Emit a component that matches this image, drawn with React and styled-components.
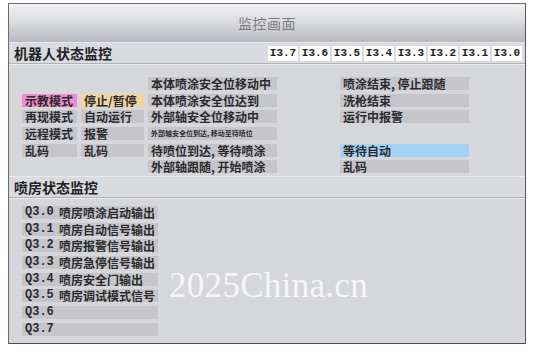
import React from 'react';
import styled, { createGlobalStyle } from 'styled-components';

const GlobalStyle = createGlobalStyle`
  html, body {
    margin: 0;
    padding: 0;
    background: #ffffff;
  }
  body {
    font-family: "Noto Sans CJK SC", "DejaVu Sans", sans-serif;
  }
`;

const tones = {
  grey: '#c6c6ca',
  pink: '#f08bcf',
  orange: '#f6d49e',
  blue: '#a2d2f5',
};

const Panel = styled.div`
  position: relative;
  margin: 3px 0 0 8px;
  width: 516px;
  height: 339px;
  border: 1px solid #6a6a6e;
  border-right-color: #55565a;
  border-bottom-color: #4a4a4e;
  background: #d6d7db;
  display: flex;
  flex-direction: column;
  overflow: hidden;
`;

const Header = styled.div`
  height: 38px;
  flex: none;
  display: flex;
  align-items: center;
  justify-content: center;
  background: linear-gradient(#f2f2f4 0%, #dcdde0 45%, #b9bac0 100%);
  color: #7c7c80;
  font-size: 14px;
  letter-spacing: 0.5px;
`;

const SectionBar = styled.div`
  height: 20px;
  flex: none;
  display: flex;
  align-items: center;
  justify-content: space-between;
  padding: 0 3px 0 5px;
  background: #dadbde;
  border-top: 1px solid #e8e8ea;
  border-bottom: 1px solid #b2b3b7;
  box-shadow: 0 1px 0 #ececee;
`;

const SectionTitle = styled.span`
  font-size: 14px;
  font-weight: 700;
  color: #222;
`;

const Inputs = styled.div`
  display: flex;
  gap: 2px;
`;

const InputTag = styled.span`
  width: 30px;
  height: 15px;
  background: #ffffff;
  display: flex;
  align-items: center;
  justify-content: center;
  font-family: "Liberation Mono", monospace;
  font-size: 11px;
  font-weight: 700;
  color: #222;
`;

const RobotGrid = styled.div`
  display: grid;
  grid-template-columns: 55px 63px 129px 55px 129px;
  grid-template-rows: repeat(6, 13px);
  column-gap: 4px;
  row-gap: 3.7px;
  padding: 13px 0 0 13px;
  height: 112px;
  box-sizing: border-box;
  flex: none;
`;

const Cell = styled.div`
  grid-column: ${p => p.col};
  grid-row: ${p => p.row};
  background: ${tones.grey};
  background: ${p => tones[p.tone || 'grey']};
  display: flex;
  align-items: center;
  padding-left: 3px;
  font-size: ${p => (p.small ? '7px' : '12px')};
  font-weight: 700;
  color: #2b2b2b;
  white-space: nowrap;
  line-height: 13px;
`;

const OutputList = styled.div`
  display: flex;
  flex-direction: column;
  gap: 3.7px;
  padding: 8px 0 0 13px;
`;

const OutputRow = styled.div`
  width: 133px;
  height: 13px;
  background: ${tones.grey};
  display: flex;
  align-items: center;
  padding-left: 3px;
  gap: 5px;
  font-size: 12px;
  font-weight: 700;
  color: #2b2b2b;
  line-height: 13px;
  white-space: nowrap;
`;

const Addr = styled.span`
  font-family: "Liberation Mono", monospace;
  font-size: 12px;
  width: 29px;
`;

const Watermark = styled.span`
  position: absolute;
  left: 160px;
  top: 262px;
  font-family: "Liberation Serif", serif;
  font-size: 35px;
  color: rgba(255, 255, 255, 0.8);
  letter-spacing: 0.3px;
  pointer-events: none;
`;

const inputs = ['I3.7', 'I3.6', 'I3.5', 'I3.4', 'I3.3', 'I3.2', 'I3.1', 'I3.0'];

const robotCells = [
  { col: 1, row: 2, tone: 'pink', text: '示教模式' },
  { col: 1, row: 3, text: '再现模式' },
  { col: 1, row: 4, text: '远程模式' },
  { col: 1, row: 5, text: '乱码' },
  { col: 2, row: 2, tone: 'orange', text: '停止/暂停' },
  { col: 2, row: 3, text: '自动运行' },
  { col: 2, row: 4, text: '报警' },
  { col: 2, row: 5, text: '乱码' },
  { col: 3, row: 1, text: '本体喷涂安全位移动中' },
  { col: 3, row: 2, text: '本体喷涂安全位达到' },
  { col: 3, row: 3, text: '外部轴安全位移动中' },
  { col: 3, row: 4, text: '外部轴安全位到达, 移动至待喷位', small: true },
  { col: 3, row: 5, text: '待喷位到达, 等待喷涂' },
  { col: 3, row: 6, text: '外部轴跟随, 开始喷涂' },
  { col: 5, row: 1, text: '喷涂结束, 停止跟随' },
  { col: 5, row: 2, text: '洗枪结束' },
  { col: 5, row: 3, text: '运行中报警' },
  { col: 5, row: 5, tone: 'blue', text: '等待自动' },
  { col: 5, row: 6, text: '乱码' },
];

const outputs = [
  ['Q3.0', '喷房喷涂启动输出'],
  ['Q3.1', '喷房自动信号输出'],
  ['Q3.2', '喷房报警信号输出'],
  ['Q3.3', '喷房急停信号输出'],
  ['Q3.4', '喷房安全门输出'],
  ['Q3.5', '喷房调试模式信号'],
  ['Q3.6', ''],
  ['Q3.7', ''],
];

const App = () => (
  <>
    <GlobalStyle />
    <Panel>
      <Header>监控画面</Header>

      <SectionBar>
        <SectionTitle>机器人状态监控</SectionTitle>
        <Inputs>
          {inputs.map(i => (
            <InputTag key={i}>{i}</InputTag>
          ))}
        </Inputs>
      </SectionBar>

      <RobotGrid>
        {robotCells.map(c => (
          <Cell
            key={`${c.col}-${c.row}`}
            col={c.col}
            row={c.row}
            tone={c.tone}
            small={c.small}
          >
            {c.text}
          </Cell>
        ))}
      </RobotGrid>

      <SectionBar>
        <SectionTitle>喷房状态监控</SectionTitle>
      </SectionBar>

      <OutputList>
        {outputs.map(([addr, label]) => (
          <OutputRow key={addr}>
            <Addr>{addr}</Addr>
            {label}
          </OutputRow>
        ))}
      </OutputList>

      <Watermark>2025China.cn</Watermark>
    </Panel>
  </>
);

export default App;
